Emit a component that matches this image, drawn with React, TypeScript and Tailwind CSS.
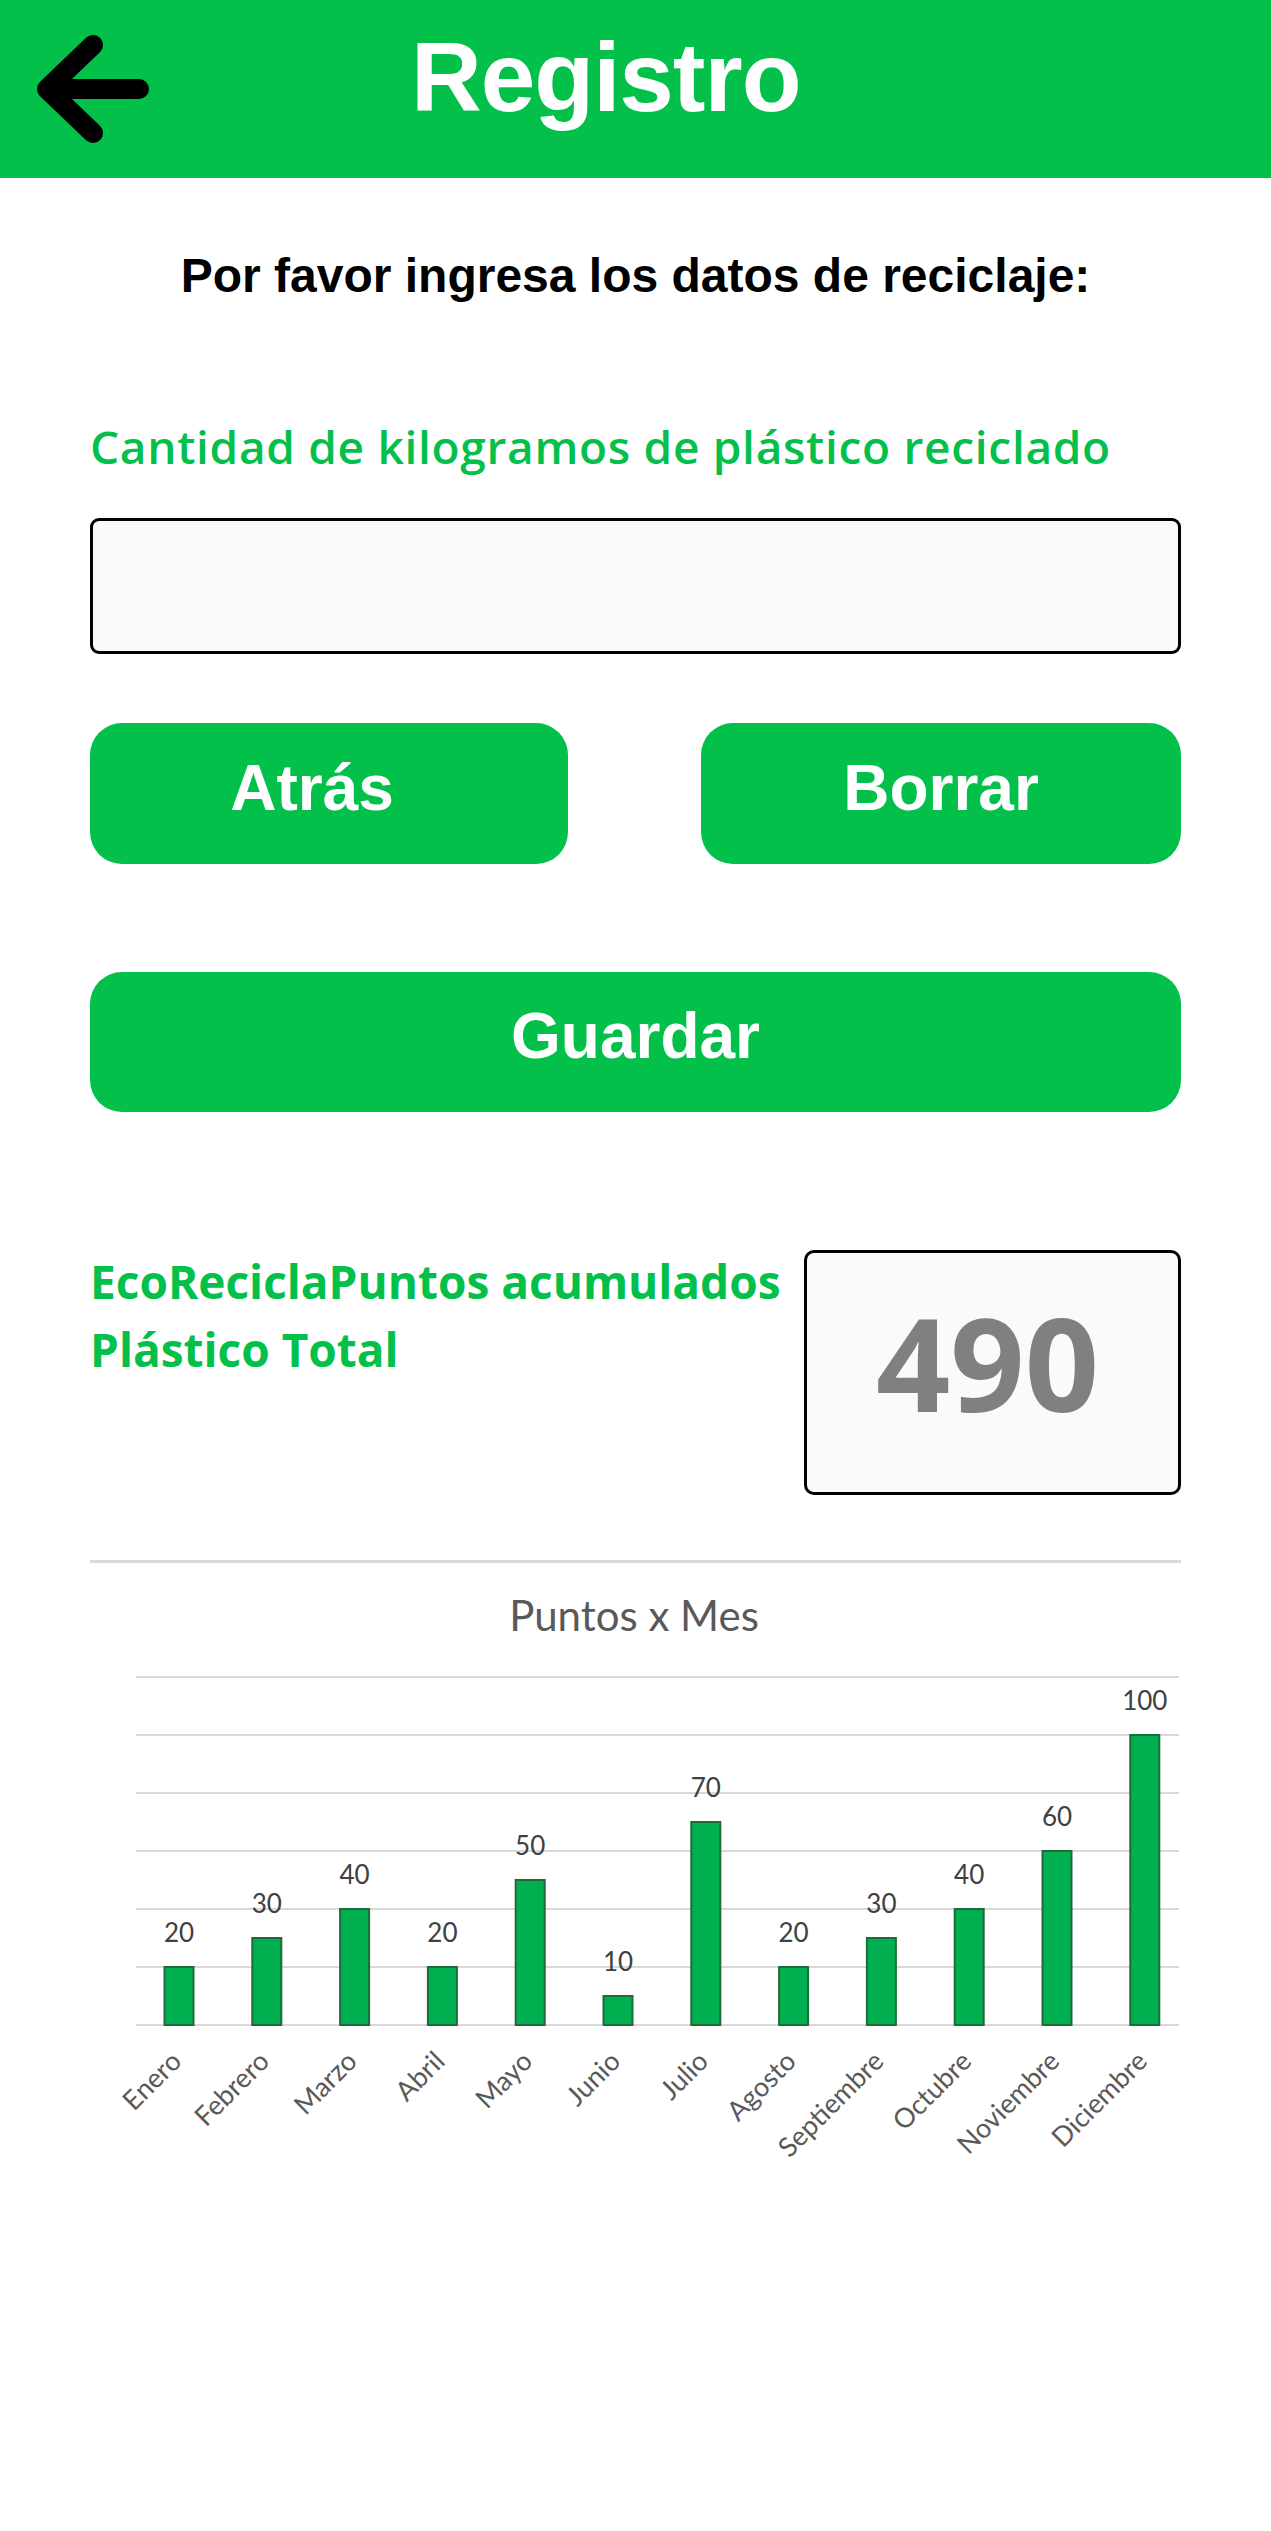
import React from "react";

const months = [
  { name: "Enero", value: 20 },
  { name: "Febrero", value: 30 },
  { name: "Marzo", value: 40 },
  { name: "Abril", value: 20 },
  { name: "Mayo", value: 50 },
  { name: "Junio", value: 10 },
  { name: "Julio", value: 70 },
  { name: "Agosto", value: 20 },
  { name: "Septiembre", value: 30 },
  { name: "Octubre", value: 40 },
  { name: "Noviembre", value: 60 },
  { name: "Diciembre", value: 100 },
];

function BackArrow() {
  return (
    <svg width="114" height="108" viewBox="0 0 114 108" fill="none">
      <path
        d="M58 10 L12 54 L58 98 M12 54 H104"
        stroke="#000"
        strokeWidth="20"
        strokeLinecap="round"
        strokeLinejoin="round"
      />
    </svg>
  );
}

function Chart() {
  const base = 462;
  const unit = 2.9;
  const grid = [0, 20, 40, 60, 80, 100, 120];
  return (
    <svg width="1089" height="620" viewBox="0 0 1089 620" className="block">
      <text
        x="544"
        y="68"
        textAnchor="middle"
        fill="#595959"
        fontSize="42"
        fontFamily="Lato, 'Open Sans', sans-serif"
      >
        Puntos x Mes
      </text>
      {grid.map((g) => (
        <line key={g} x1="46" x2="1089" y1={base - g * unit} y2={base - g * unit} stroke="#d9d9d9" strokeWidth="2" />
      ))}
      {months.map((m, i) => {
        const cx = 89 + 87.8 * i;
        const h = m.value * unit;
        return (
          <g key={m.name}>
            <rect x={cx - 14.5} y={base - h} width="29" height={h} fill="#00b050" stroke="#1f6b37" strokeWidth="2" />
            <text
              x={cx}
              y={base - h - 25}
              textAnchor="middle"
              fill="#404040"
              fontSize="26"
              fontFamily="Lato, 'Open Sans', sans-serif"
            >
              {m.value}
            </text>
            <text
              x={cx + 4}
              y={base + 38}
              textAnchor="end"
              fill="#595959"
              fontSize="27"
              fontFamily="Lato, 'Open Sans', sans-serif"
              transform={`rotate(-45 ${cx + 4} ${base + 38})`}
            >
              {m.name}
            </text>
          </g>
        );
      })}
    </svg>
  );
}

export default function App() {
  return (
    <div className="w-[1271px] min-h-[2531px] bg-white font-['Liberation_Sans',Arial,sans-serif]">
      <header className="h-[178px] bg-[#02c04a] flex items-center">
        <button className="ml-[35px]" aria-label="Atrás">
          <BackArrow />
        </button>
        <h1 className="ml-[262px] -mt-[24px] text-white font-bold text-[98px] leading-none tracking-[-1px]">
          Registro
        </h1>
      </header>

      <p className="mt-[74px] text-center text-black font-bold text-[48px] leading-none">
        Por favor ingresa los datos de reciclaje:
      </p>

      <div className="px-[90px]">
        <label className="block mt-[123px] text-[#02c04a] font-['Open_Sans',sans-serif] font-semibold tracking-[0.7px] text-[46px] leading-none">
          Cantidad de kilogramos de plástico reciclado
        </label>

        <input
          type="text"
          className="block mt-[49px] w-full h-[136px] bg-[#fafafa] border-[3px] border-black rounded-[9px] outline-none px-6 text-[40px]"
        />

        <div className="mt-[69px] flex justify-between">
          <button className="w-[478px] h-[141px] rounded-[32px] bg-[#02c04a] text-white font-bold text-[64px] leading-none pr-[34px] pb-[12px]">
            Atrás
          </button>
          <button className="w-[480px] h-[141px] rounded-[32px] bg-[#02c04a] text-white font-bold text-[64px] leading-none pb-[12px]">
            Borrar
          </button>
        </div>

        <button className="mt-[108px] w-full h-[140px] rounded-[32px] bg-[#02c04a] text-white font-bold text-[64px] leading-none pb-[12px]">
          Guardar
        </button>

        <div className="mt-[138px] flex justify-between items-start">
          <div className="-mt-[3px] text-[#02c04a] font-['Open_Sans',sans-serif] font-bold text-[46px] leading-[68px]">
            <div>EcoReciclaPuntos acumulados</div>
            <div>Plástico Total</div>
          </div>
          <div className="w-[377px] h-[245px] bg-[#fafafa] border-[3px] border-black rounded-[10px] flex items-center justify-center">
            <span className="text-[#808080] font-['Open_Sans',sans-serif] font-bold text-[130px] leading-none -mt-[22px] -ml-[10px]">
              490
            </span>
          </div>
        </div>

        <div className="mt-[65px] border-t-[3px] border-[#d9d9d9]">
          <Chart />
        </div>
      </div>
    </div>
  );
}
